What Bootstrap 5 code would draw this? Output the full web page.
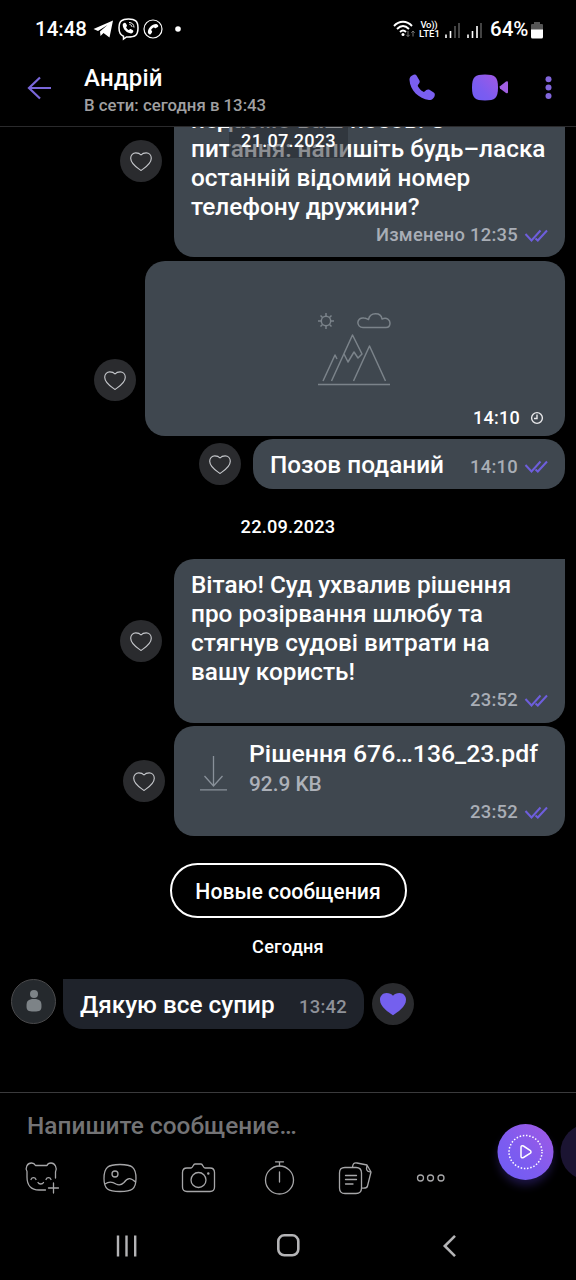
<!DOCTYPE html>
<html lang="uk">
<head>
<meta charset="utf-8">
<meta name="viewport" content="width=device-width, initial-scale=1">
<title>Андрій</title>
<link href="https://cdn.jsdelivr.net/npm/bootstrap@5.3.0/dist/css/bootstrap.min.css" rel="stylesheet">
<style>
  body { font-family: Roboto, "Liberation Sans", sans-serif; font-weight: 500; background: #000; color: #fff; width: 576px; height: 1280px; overflow: hidden; line-height: 1.2; }
  svg { display: block; flex: none; overflow: visible; }
  .status { height: 58px; padding-left: 35px; padding-right: 33px; font-size: 20.5px; }
  .head { height: 69px; padding: 0 24.5px 0 27px; border-bottom: 1px solid #2a2a2c; }
  .head-name { font-size: 24px; line-height: 28px; margin-top: 6px; letter-spacing: .2px; }
  .head-sub { font-size: 16.8px; line-height: 20px; color: #a0a0a2; margin-top: 3px; }
  .chat { height: 965px; padding: 0 11px; }
  .bubble { background: #3f474f; border-radius: 20px; font-size: 24.35px; line-height: 29px; padding-left: 17px; padding-right: 17px; }
  .b-wide { width: 391px; }
  .b-first { height: 192px; margin-top: -62px; padding-top: 40px; }
  .b-photo { width: 420px; height: 175px; }
  .b-short { width: 312px; height: 50px; }
  .b-text { height: 164px; padding-top: 11px; border-top-right-radius: 0; }
  .b-file { height: 110px; padding-top: 13px; }
  .b-in { width: 301px; height: 50px; background: #1f232b; border-top-left-radius: 0; }
  .meta { font-size: 18.4px; line-height: 22px; letter-spacing: .25px; color: #a9aeb6; gap: 7px; }
  .meta-b { font-size: 18px; }
  .ticks { fill: none; stroke: #6e5edc; stroke-width: 2; }
  .react { width: 42px; height: 42px; background: #2a2b2e; flex: none; }
  .react .ln { stroke: #c4c6ca; stroke-width: 1.15; }
  .g12 { gap: 12px; } .g9 { gap: 9px; }
  .day { font-size: 18.2px; line-height: 22px; letter-spacing: .2px; }
  .day-float { left: 229px; top: 0; width: 119px; height: 31px; background: rgba(37,41,48,.52); padding-top: 3px; }
  .btn-new { width: 237px; height: 55px; border: 2px solid #fff; border-radius: 27.5px; color: #fff; font-size: 21.2px; font-weight: 500; padding: 3px 0 0; }
  .file-name { font-size: 24.8px; }
  .file-size { font-size: 20.8px; color: #adb1b9; }
  .avatar { width: 45px; height: 45px; background: #25292d; border: 1px solid #4a4a4c; }
  .composer { height: 118px; border-top: 1px solid #3a3a3c; }
  .hint { font-size: 24.4px; line-height: 30px; color: #737375; padding: 18px 0 0 27px; letter-spacing: .04px; }
  .tools { padding: 20px 0 0 25px; }
  .ln { fill: none; stroke: #a6a6a8; stroke-width: 1.3; stroke-linecap: round; stroke-linejoin: round; }
  .fab { left: 497px; top: 31px; }
  .sysnav { height: 70px; }
</style>
</head>
<body>
<svg width="0" height="0" class="position-absolute">
  <defs>
    <linearGradient id="vio" x1="0" y1="1" x2="1" y2="0"><stop offset="0" stop-color="#6f5cf5"/><stop offset=".4" stop-color="#7c5cf0"/><stop offset="1" stop-color="#a259e4"/></linearGradient>
    <path id="heart" d="M11 18.500C7.500 16 .7 12 .7 6.200C.7 3 3 .8 5.800 .8C8.200 .8 9.800 1.500 11 3C12.200 1.500 13.800 .8 16.200 .8C19 .8 21.300 3 21.300 6.200C21.300 12 14.500 16 11 18.500Z"/>
    <path id="ticks" d="M.5 5L6.500 11.500L15.500 1.500M10.500 9.500L12.800 11.500L22 1.500"/>
    <path id="handset" d="M5.500 .5C3 1 .3 3 .5 6C1 16 10 25 20 26C23 26.200 25.500 24 25.800 21C26 20 25.500 19 24.700 18.500L20.500 15.800C19.400 15.200 18.200 15.300 17.300 16.100L15.600 17.600C15 18 14.500 18 14 17.600C12 16.300 10.300 14.500 9 12.400C8.600 11.800 8.700 11.200 9.100 10.700L10.200 9.200C10.900 8.300 10.900 7.200 10.300 6.200L7.700 1.700C7.200 .8 6.400 .4 5.500 .5Z"/>
  </defs>
</svg>

<div class="status d-flex align-items-center justify-content-between">
  <div class="d-flex align-items-center">
    <span style="width:58px">14:48</span>
    <svg width="21" height="18" viewBox="0 0 21 18"><path d="M.5 9L20 .5L16.500 17.500L10.500 13L7.500 16L7 11.500L14.500 5L5 11Z" fill="#fff"/></svg>
    <svg class="ms-1" width="21" height="22" viewBox="0 0 21 22" fill="none" stroke="#fff"><path d="M10.500 1C4 1 1 3 1 10C1 15 2.500 17 5.500 18.200V21L8.500 18.900C16.500 19.200 20 18 20 10C20 3 17 1 10.500 1Z" stroke-width="1.500"/><use href="#handset" transform="translate(4.500 4.500) scale(.42)" fill="#fff" stroke="none"/><path d="M11 4.500C14 4.500 16 6.500 16 9.500M11.500 6.500C13 6.700 14 7.700 14 9" stroke-width="1"/></svg>
    <svg class="ms-1" width="20" height="20" viewBox="0 0 20 20" fill="none" stroke="#fff"><circle cx="10" cy="10" r="9" stroke-width="1.200"/><use href="#handset" transform="translate(15.500 4.800) rotate(90) scale(.41)" fill="#fff" stroke="none"/></svg>
    <svg style="margin-left:12px" width="6" height="6"><circle cx="3" cy="3" r="2.800" fill="#fff"/></svg>
  </div>
  <div class="d-flex align-items-center">
    <svg width="22" height="18" viewBox="0 0 22 18" fill="none" stroke="#fff" stroke-width="1.900"><path d="M1 6C6 .3 14 .3 19 6M4 9C8 5 12 5 16 9M7 12C9 10 11 10 13 12"/><circle cx="10" cy="14.500" r="1.500" fill="#fff" stroke="none"/><path d="M15 11V16.500M13.300 14.800L15 16.500L16.700 14.800M20 16.500V11M18.300 12.700L20 11L21.700 12.700" stroke="#777" stroke-width="1"/></svg>
    <svg class="ms-1" width="22" height="18" viewBox="0 0 22 18" fill="#fff" font-weight="500"><text x="1.500" y="8" font-size="9.500" textLength="17">Vo))</text><text x="0" y="17" font-size="9.500" textLength="21">LTE1</text></svg>
    <svg style="margin:1px 0 0 4px" width="16" height="16" viewBox="0 0 16 16" stroke-width="1.600"><path d="M1 12.500V16M5.500 9V16" stroke="#fff"/><path d="M10 4V16M14 1V16" stroke="#555"/></svg>
    <svg style="margin:1px 0 0 6px" width="16" height="16" viewBox="0 0 16 16" stroke-width="1.600"><path d="M1 12.500V16M5.500 9V16M10 4V16" stroke="#fff"/><path d="M14 1V16" stroke="#555"/></svg>
    <span style="margin-left:7px;width:41px">64%</span>
    <svg style="margin-top:1px" width="12" height="18" viewBox="0 0 12 18"><path d="M3 1H9V3H11Q12 3 12 4V9H0V4Q0 3 1 3H3Z" fill="#555"/><path d="M0 8.500H12V16Q12 17.500 10.500 17.500H1.500Q0 17.500 0 16Z" fill="#fff"/></svg>
  </div>
</div>

<header class="head d-flex">
  <svg style="margin-top:18px" width="24" height="24" viewBox="0 0 24 24" fill="none" stroke="#7a67da" stroke-width="2.200"><path d="M24 12H2M13 1.500L2 12L13 22.500"/></svg>
  <div class="flex-grow-1" style="margin-left:33px">
    <div class="head-name"><span>Андрій</span></div>
    <div class="head-sub"><span>В сети: сегодня в 13:43</span></div>
  </div>
  <svg style="margin:16px 37px 0 0" width="26" height="26" viewBox="0 0 26 26"><use href="#handset" fill="#7a5ff0"/></svg>
  <svg style="margin:16px 35.500px 0 0" width="37" height="27" viewBox="0 0 37 27" fill="url(#vio)"><path d="M13 .5C23 .5 26 3 26 13.500C26 24 23 26.500 13 26.500C3 26.500 0 24 0 13.500C0 3 3 .5 13 .5Z"/><path d="M28 12.300L34 7.500Q36 6.500 36 8.500V18Q36 20 34 19L28 14.500Q27.300 13.500 28 12.300Z" fill="#a160e2"/></svg>
  <svg style="margin-top:18px" width="7" height="24" viewBox="0 0 7 24" fill="#8266dc"><circle cx="3.500" cy="3.200" r="3"/><circle cx="3.500" cy="11.500" r="3"/><circle cx="3.500" cy="19.900" r="3"/></svg>
</header>

<main class="chat position-relative overflow-hidden d-flex flex-column">
  <div class="d-flex justify-content-end g12">
    <div class="react rounded-circle d-flex align-items-center justify-content-center" style="margin-top:13px"><svg width="22" height="19"><use href="#heart" class="ln"/></svg></div>
    <div class="bubble b-wide b-first">
      <div class="text-nowrap"><span>подаємо ваш позов. З</span><br><span>питання: напишіть будь–ласка</span><br><span>останній відомий номер</span><br><span>телефону дружини?</span></div>
      <div class="meta d-flex justify-content-end align-items-center" style="margin-top:3px"><span>Изменено 12:35</span><svg class="ticks" width="23" height="13" viewBox="0 0 23 13"><use href="#ticks"/></svg></div>
    </div>
  </div>

  <div class="d-flex justify-content-end g9" style="margin-top:4px">
    <div class="react rounded-circle d-flex align-items-center justify-content-center" style="margin-top:98px"><svg width="22" height="19"><use href="#heart" class="ln"/></svg></div>
    <div class="bubble b-photo d-flex flex-column justify-content-between">
      <svg style="margin:51px 0 0 156px" width="72" height="73" viewBox="0 0 72 73" fill="none" stroke="#7b838a" stroke-width="1.500" stroke-linejoin="round"><circle cx="8" cy="9" r="4.700"/><path d="M8 1V4M8 14V17M0 9H3M13 9H16M2.500 3.500L4.500 5.500M11.500 12.500L13.500 14.500M2.500 14.500L4.500 12.500M11.500 5.500L13.500 3.500M45 15.500C38 15.500 38 5 46 6C48 6 49 7 50.500 7.500C52 0 63 0 64 7C69 5 72 8 72 11C72 14 70 15.500 68 15.500ZM5 69L17 43L19 47M13.500 69L34.500 23L44 42L40 46L36 40L30 50L26 42M35.500 69L51.500 34L67.500 69M0 72.500H72"/></svg>
      <div class="meta meta-b d-flex justify-content-end align-items-center text-white" style="margin-bottom:7px;gap:11px;padding-right:5px"><span>14:10</span><svg width="12" height="12" viewBox="0 0 12 12" fill="none" stroke="#e8e8ea" stroke-width="1.400"><circle cx="6" cy="6" r="5.400"/><path d="M6 2.500V6.500H3"/></svg></div>
    </div>
  </div>

  <div class="d-flex justify-content-end align-items-center g12" style="margin-top:3px">
    <div class="react rounded-circle d-flex align-items-center justify-content-center"><svg width="22" height="19"><use href="#heart" class="ln"/></svg></div>
    <div class="bubble b-short d-flex align-items-center justify-content-between">
      <span>Позов поданий</span>
      <div class="meta d-flex align-items-center" style="margin-top:5px"><span>14:10</span><svg class="ticks" width="23" height="13" viewBox="0 0 23 13"><use href="#ticks"/></svg></div>
    </div>
  </div>

  <div class="day text-center" style="margin:27px 0 21px"><span>22.09.2023</span></div>

  <div class="d-flex justify-content-end align-items-center g12">
    <div class="react rounded-circle d-flex align-items-center justify-content-center"><svg width="22" height="19"><use href="#heart" class="ln"/></svg></div>
    <div class="bubble b-wide b-text">
      <div class="text-nowrap"><span>Вітаю! Суд ухвалив рішення</span><br><span>про розірвання шлюбу та</span><br><span>стягнув судові витрати на</span><br><span>вашу користь!</span></div>
      <div class="meta d-flex justify-content-end align-items-center" style="margin-top:3px"><span>23:52</span><svg class="ticks" width="23" height="13" viewBox="0 0 23 13"><use href="#ticks"/></svg></div>
    </div>
  </div>

  <div class="d-flex justify-content-end align-items-center g9" style="margin-top:3px">
    <div class="react rounded-circle d-flex align-items-center justify-content-center"><svg width="22" height="19"><use href="#heart" class="ln"/></svg></div>
    <div class="bubble b-wide b-file">
      <div class="d-flex">
        <svg style="margin:17px 22px 0 9px" width="27" height="35" viewBox="0 0 27 35" fill="none" stroke="#89919a" stroke-width="1.300"><path d="M13.500 0V30M4.500 20L13.500 30L22.500 20M0 33.800H27"/></svg>
        <div class="text-nowrap"><span class="file-name">Рішення 676…136_23.pdf</span><br><span class="file-size">92.9 KB</span></div>
      </div>
      <div class="meta d-flex justify-content-end align-items-center" style="margin-top:2px"><span>23:52</span><svg class="ticks" width="23" height="13" viewBox="0 0 23 13"><use href="#ticks"/></svg></div>
    </div>
  </div>

  <button class="btn btn-new align-self-center" style="margin-top:27px"><span>Новые сообщения</span></button>
  <div class="day text-center" style="margin:18px 0 21px"><span>Сегодня</span></div>

  <div class="d-flex g9">
    <div class="avatar rounded-circle d-flex justify-content-center"><svg style="margin-top:10px" width="16" height="22" viewBox="0 0 16 22" fill="#7d8387"><circle cx="8" cy="4" r="4"/><path d="M8 9C14 9 15.500 11 15.500 16C15.500 20.500 14 21.500 8 21.500C2 21.500 .5 20.500 .5 16C.5 11 2 9 8 9Z"/></svg></div>
    <div class="bubble b-in d-flex align-items-center justify-content-between" style="margin-left:-2px">
      <span style="margin-top:1px">Дякую все супир</span><span class="meta" style="margin-top:5px;color:#8f9299">13:42</span>
    </div>
    <div class="react rounded-circle d-flex align-items-center justify-content-center" style="margin-top:4px;margin-left:-1px"><svg width="28" height="24" viewBox="0 0 22 19"><use href="#heart" fill="#7460ee"/></svg></div>
  </div>

  <div class="day day-float position-absolute text-center"><span>21.07.2023</span></div>
</main>

<footer>
  <div class="composer position-relative overflow-hidden">
    <div class="hint"><span>Напишите сообщение…</span></div>
    <div class="tools d-flex">
      <svg style="margin-right:43px" width="36" height="36" viewBox="0 0 36 36" class="ln"><path d="M30.500 17V11C32.500 7 30 2 26 2C24 2 22.500 3 22 4.500H10.500C9.500 2.500 8 2 6.500 2C2 2 0 7 2 10.500V16C2 24 6 29 14 29H20.500M28.500 22V32M23.500 27H33.500M6 18.500C7 16 10 16 11 18.500M21 18.500C22 16 25 16 26 18.500M13 21.500C14 23.500 17.500 23.500 18.500 21.500"/></svg>
      <svg style="margin-right:42px" width="36" height="36" viewBox="0 0 36 36" class="ln"><path d="M16 3.500C28 3.500 32 6 32 17.500C32 28 28 30.500 16 30.500C4 30.500 0 28 0 17.500C0 6 4 3.500 16 3.500ZM1 23C5 20 9 21 12 23C16 25 18 23.500 20 21.500C24 16 27 17 31.500 21"/><circle cx="11" cy="13" r="3"/></svg>
      <svg style="margin-right:46px" width="36" height="36" viewBox="0 0 36 36" class="ln"><path d="M5 7H9C11 7 11 3 13 3H19C21 3 21 7 23 7H28Q32.500 7 32.500 11.500V26Q32.500 30.500 28 30.500H5Q.5 30.500 .5 26V11.500Q.5 7 5 7Z"/><circle cx="16.500" cy="19" r="7.500"/><circle cx="26.300" cy="12.500" r=".6"/></svg>
      <svg style="margin-right:39px" width="36" height="36" viewBox="0 0 36 36" class="ln"><circle cx="15.500" cy="19" r="14"/><path d="M11.500 .8H19.500M15.500 1V5M15.500 11V21"/></svg>
      <svg style="margin-right:42px" width="36" height="36" viewBox="0 0 36 36" class="ln"><path d="M6 6.500H17Q22.500 6.500 22.500 12V27Q22.500 32.500 17 32.500H6Q.5 32.500 .5 27V12Q.5 6.500 6 6.500ZM6.500 14.500H17.500M6.500 18.500H17.500M6.500 23H14M13.500 6C14 2.500 15 1.500 18 2L28 4L32 11L28.500 25Q28 27.500 23 27M28 4L27.500 8Q28 11 32 11"/></svg>
      <svg width="36" height="36" viewBox="0 0 36 36" class="ln"><circle cx="3.500" cy="17" r="3"/><circle cx="13.500" cy="17" r="3"/><circle cx="24" cy="17" r="3"/></svg>
    </div>
    <svg class="fab position-absolute" width="79" height="60" viewBox="0 0 79 60" fill="none"><circle cx="28.500" cy="34" r="27" fill="#4a35b0" opacity=".4" style="filter:blur(5px)"/><circle cx="28.500" cy="28" r="28" fill="url(#vio)"/><circle cx="28.500" cy="28" r="16.500" stroke="#fff" stroke-width="1.500" stroke-dasharray="1.500 1.740"/><path d="M24 23.500Q24 21 26.500 22L33 26.300Q35 28 33 29.500L26.500 33.500Q24 34.500 24 32Z" stroke="#fff" stroke-width="1.500"/><circle cx="91.500" cy="28" r="28" fill="#1b1432"/></svg>
  </div>
  <nav class="sysnav d-flex" style="padding-left:116px">
    <svg style="margin-top:25px" width="21" height="22" stroke="#b4b4b6" stroke-width="2.400"><path d="M2 .5V21.500M10.500 .5V21.500M19.200 .5V21.500"/></svg>
    <svg style="margin:24px 0 0 139.500px" width="23" height="23" fill="none" stroke="#b4b4b6" stroke-width="2.600"><rect x="1.300" y="1.300" width="20" height="20" rx="6"/></svg>
    <svg style="margin:25px 0 0 143.500px" width="13" height="22" fill="none" stroke="#b4b4b6" stroke-width="2.600"><path d="M12 .8L1.800 11L12 21.200"/></svg>
  </nav>
</footer>
<script src="https://cdn.jsdelivr.net/npm/bootstrap@5.3.0/dist/js/bootstrap.bundle.min.js"></script>
</body>
</html>
